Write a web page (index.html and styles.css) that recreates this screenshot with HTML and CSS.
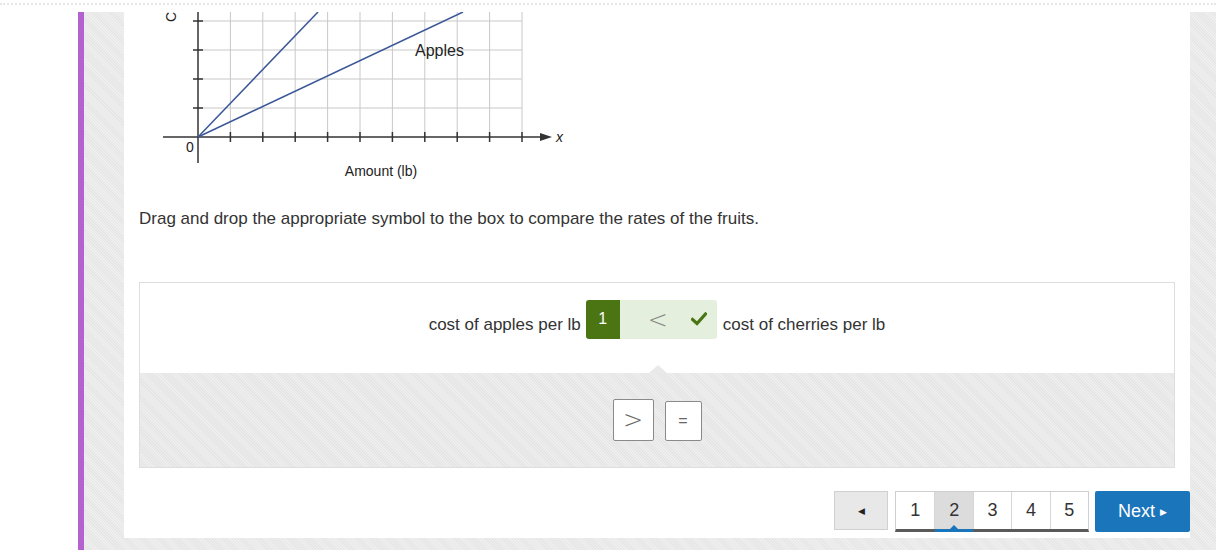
FILE: index.html
```html
<!DOCTYPE html>
<html>
<head>
<meta charset="utf-8">
<link rel="stylesheet" href="styles.css">
</head>
<body>
<div class="topbar"><div class="dots"></div></div>
<div class="main">
  <div class="leftgap"></div>
  <div class="accent"></div>
  <div class="stage">
    <div class="card">
      <svg class="graph" width="430" height="172" viewBox="0 0 430 172">
        <g stroke="#c8c8c8" stroke-width="1">
          <line x1="91.4" y1="0" x2="91.4" y2="125"/>
          <line x1="123.8" y1="0" x2="123.8" y2="125"/>
          <line x1="156.2" y1="0" x2="156.2" y2="125"/>
          <line x1="188.6" y1="0" x2="188.6" y2="125"/>
          <line x1="221" y1="0" x2="221" y2="125"/>
          <line x1="253.4" y1="0" x2="253.4" y2="125"/>
          <line x1="285.8" y1="0" x2="285.8" y2="125"/>
          <line x1="318.2" y1="0" x2="318.2" y2="125"/>
          <line x1="350.6" y1="0" x2="350.6" y2="125"/>
          <line x1="383" y1="0" x2="383" y2="125"/>
          <line x1="59" y1="96" x2="383" y2="96"/>
          <line x1="59" y1="67" x2="383" y2="67"/>
          <line x1="59" y1="38" x2="383" y2="38"/>
          <line x1="59" y1="9" x2="383" y2="9"/>
        </g>
        <g stroke="#333" stroke-width="1.5">
          <line x1="24" y1="125" x2="405" y2="125"/>
          <line x1="59" y1="0" x2="59" y2="151"/>
          <line x1="91.4" y1="120" x2="91.4" y2="130"/>
          <line x1="123.8" y1="120" x2="123.8" y2="130"/>
          <line x1="156.2" y1="120" x2="156.2" y2="130"/>
          <line x1="188.6" y1="120" x2="188.6" y2="130"/>
          <line x1="221" y1="120" x2="221" y2="130"/>
          <line x1="253.4" y1="120" x2="253.4" y2="130"/>
          <line x1="285.8" y1="120" x2="285.8" y2="130"/>
          <line x1="318.2" y1="120" x2="318.2" y2="130"/>
          <line x1="350.6" y1="120" x2="350.6" y2="130"/>
          <line x1="383" y1="120" x2="383" y2="130"/>
          <line x1="54" y1="96" x2="64" y2="96"/>
          <line x1="54" y1="67" x2="64" y2="67"/>
          <line x1="54" y1="38" x2="64" y2="38"/>
          <line x1="54" y1="9" x2="64" y2="9"/>
        </g>
        <polygon points="401,121 413,125 401,129" fill="#333"/>
        <g stroke="#3a5797" stroke-width="1.5">
          <line x1="59" y1="125" x2="179" y2="0"/>
          <line x1="59" y1="125" x2="324" y2="0"/>
        </g>
        <text x="417" y="130" class="gt italic">x</text>
        <text x="47" y="140" class="gt small">0</text>
        <text x="276" y="44" class="gt">Apples</text>
        <text x="242" y="164" class="gt mid" text-anchor="middle">Amount (lb)</text>
        <text x="37" y="10" class="gt mid" transform="rotate(-90 37 10)">C</text>
      </svg>
      <p class="question">Drag and drop the appropriate symbol to the box to compare the rates of the fruits.</p>
      <div class="panel">
        <div class="statement">
          <span class="phrase">cost of apples per lb</span>
          <div class="drop">
            <span class="badge">1</span>
            <span class="placed">&lt;</span>
            <svg class="check" width="16" height="14" viewBox="0 0 16 14"><path d="M1.5 7.5 L6 11.5 L14.5 2" fill="none" stroke="#4b7512" stroke-width="3.2" stroke-linecap="square"/></svg>
          </div>
          <span class="phrase">cost of cherries per lb</span>
        </div>
        <div class="choices">
          <div class="choice big">&gt;</div>
          <div class="choice small">=</div>
        </div>
      </div>
      <div class="pager">
        <div class="prev">&#9664;</div>
        <div class="pages">
          <div class="page">1</div>
          <div class="page current">2</div>
          <div class="page">3</div>
          <div class="page">4</div>
          <div class="page">5</div>
        </div>
        <div class="next">Next <span class="tri">&#9654;</span></div>
      </div>
    </div>
  </div>
</div>
</body>
</html>
```
FILE: styles.css
```css
html, body {
  margin: 0;
  padding: 0;
  width: 1216px;
  height: 550px;
  overflow: hidden;
  background: #fff;
  font-family: "Liberation Sans", Arial, sans-serif;
  color: #333;
}
.topbar {
  height: 12px;
  padding-top: 3px;
  box-sizing: border-box;
}
.dots {
  height: 0;
  border-top: 2px dotted #e6e6e6;
}
.main {
  display: flex;
  height: 538px;
}
.leftgap {
  width: 78px;
  background: #fff;
}
.accent {
  width: 6px;
  background: #b362cf;
}
.stage {
  flex: 1;
  background-color: #ebebeb;
  background-image: repeating-linear-gradient(45deg, #e6e6e6 0 1px, #efefef 1px 2px);
  padding: 0 26px 12px 40px;
}
.card {
  background: #fff;
  height: 526px;
  padding: 0 15px;
  box-sizing: border-box;
  overflow: hidden;
}
.graph {
  display: block;
}
.gt {
  font-family: "Liberation Sans", Arial, sans-serif;
  font-size: 16px;
  fill: #222;
}
.gt.mid {
  font-size: 14px;
}
.gt.small {
  font-size: 14px;
}
.gt.italic {
  font-style: italic;
  font-size: 14px;
}
.question {
  margin: 25px 0 0;
  font-size: 17px;
  line-height: 20px;
  color: #333;
}
.panel {
  margin-top: 53px;
  border: 1px solid #dedede;
  height: 186px;
  box-sizing: border-box;
  display: flex;
  flex-direction: column;
}
.statement {
  height: 90px;
  background: #fff;
  display: flex;
  justify-content: center;
  align-items: flex-start;
  padding-top: 17px;
  box-sizing: border-box;
  gap: 5px;
}
.phrase {
  font-size: 17px;
  line-height: 20px;
  margin-top: 15px;
  color: #333;
}
.drop {
  display: flex;
  align-items: center;
  width: 131px;
  height: 39px;
  background: #e5efdd;
  border-radius: 3px;
  margin-right: 1px;
}
.badge {
  width: 34px;
  height: 39px;
  background: #4b7512;
  color: #fff;
  border-radius: 3px 0 0 3px;
  font-size: 16px;
  line-height: 38px;
  text-align: center;
}
.placed {
  width: 60px;
  text-align: center;
  font-size: 24px;
  line-height: 38px;
  color: #888;
  font-family: "DejaVu Sans", sans-serif;
  font-weight: 200;
  margin-left: 8px;
}
.check {
  display: block;
  margin-left: 3px;
  margin-top: -2px;
}
.choices {
  flex: 1;
  position: relative;
  background-color: #ebebeb;
  background-image: repeating-linear-gradient(45deg, #e5e5e5 0 1px, #eeeeee 1px 2px);
  display: flex;
  justify-content: center;
  align-items: flex-start;
  gap: 11px;
  padding-top: 26px;
  box-sizing: border-box;
}
.choices::before {
  content: "";
  position: absolute;
  left: 509px;
  top: -8px;
  border-left: 9px solid transparent;
  border-right: 9px solid transparent;
  border-bottom: 8px solid #e9e9e9;
}
.choice {
  background: #fff;
  border: 1px solid #8a8a8a;
  border-radius: 2px;
  box-sizing: border-box;
  display: flex;
  align-items: center;
  justify-content: center;
  color: #666;
}
.choice.big {
  width: 41px;
  height: 42px;
  font-size: 24px;
  font-family: "DejaVu Sans", sans-serif;
  font-weight: 200;
}
.choice.small {
  width: 37px;
  height: 40px;
  margin-top: 2px;
  font-size: 16px;
}
.pager {
  display: flex;
  justify-content: flex-end;
  margin: 23px -15px 0 0;
  align-items: flex-start;
}
.prev {
  width: 54px;
  height: 39px;
  box-sizing: border-box;
  border: 1px solid #d0d0d0;
  background: #e8e8e8;
  font-size: 9px;
  color: #222;
  display: flex;
  align-items: center;
  justify-content: center;
  margin-right: 7px;
}
.pages {
  display: flex;
  border: 1px solid #cfcfcf;
  border-bottom: 3px solid #5a5a5a;
  height: 41px;
  box-sizing: border-box;
  background: #fff;
  margin-right: 6px;
}
.page {
  width: 38.4px;
  box-sizing: border-box;
  border-left: 1px solid #d6d6d6;
  font-size: 18px;
  color: #333;
  display: flex;
  align-items: center;
  justify-content: center;
  position: relative;
}
.page:first-child {
  border-left: none;
}
.page.current {
  background: #dcdcdc;
}
.page.current::after {
  content: "";
  position: absolute;
  left: 0;
  right: 0;
  bottom: -3px;
  height: 3px;
  background: #1b75bb;
}
.page.current::before {
  content: "";
  position: absolute;
  left: 50%;
  margin-left: -4px;
  bottom: 0;
  border-left: 4px solid transparent;
  border-right: 4px solid transparent;
  border-bottom: 4px solid #1b75bb;
}
.next {
  width: 95px;
  height: 41px;
  background: #1b75bb;
  border-radius: 2px;
  color: #fff;
  font-size: 18px;
  display: flex;
  align-items: center;
  justify-content: center;
  gap: 5px;
}
.next .tri {
  font-size: 9px;
}
```
